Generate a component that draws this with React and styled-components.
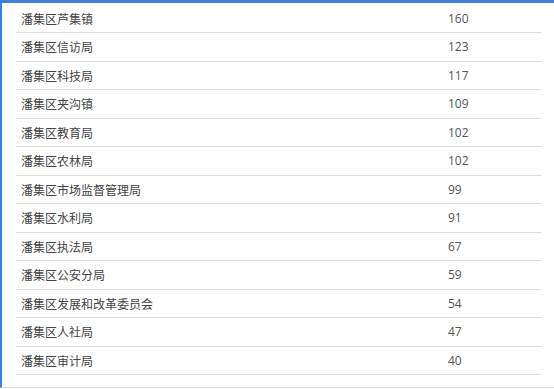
import React from 'react'
import { styled, createGlobalStyle } from 'styled-components'

const rows = [
  ['潘集区芦集镇', 160],
  ['潘集区信访局', 123],
  ['潘集区科技局', 117],
  ['潘集区夹沟镇', 109],
  ['潘集区教育局', 102],
  ['潘集区农林局', 102],
  ['潘集区市场监督管理局', 99],
  ['潘集区水利局', 91],
  ['潘集区执法局', 67],
  ['潘集区公安分局', 59],
  ['潘集区发展和改革委员会', 54],
  ['潘集区人社局', 47],
  ['潘集区审计局', 40],
]

const Global = createGlobalStyle`
body {
  margin: 0;
  background: #fff;
  font-family: "Microsoft YaHei", "Noto Sans CJK SC", "Liberation Sans", sans-serif;
}
`

const Panel = styled.div`
width: 554px;
height: 388px;
box-sizing: border-box;
border-top: 3px solid #3f7fd6;
border-left: 2px solid #3f7fd6;
border-bottom: 1px solid #dcdcdc;
background: #fff;
padding: 1.5px 12px 0 14px;
overflow: hidden;
`

const Row = styled.div`
display: flex;
align-items: center;
height: 28.5px;
box-sizing: border-box;
border-bottom: 1px solid #dedede;
font-size: 12px;
color: #444;
`

const Name = styled.div`
width: 432px;
padding-left: 5px;
box-sizing: border-box;
`

const Value = styled.div`
font-family: "Open Sans", "Liberation Sans", sans-serif;
font-size: 12px;
color: #555;
`

const App = () => {
  return (
    <>
      <Global />
      <Panel>
        {rows.map(([name, count]) => (
          <Row key={name}>
            <Name>{name}</Name>
            <Value>{count}</Value>
          </Row>
        ))}
      </Panel>
    </>
  )
}

export default App
